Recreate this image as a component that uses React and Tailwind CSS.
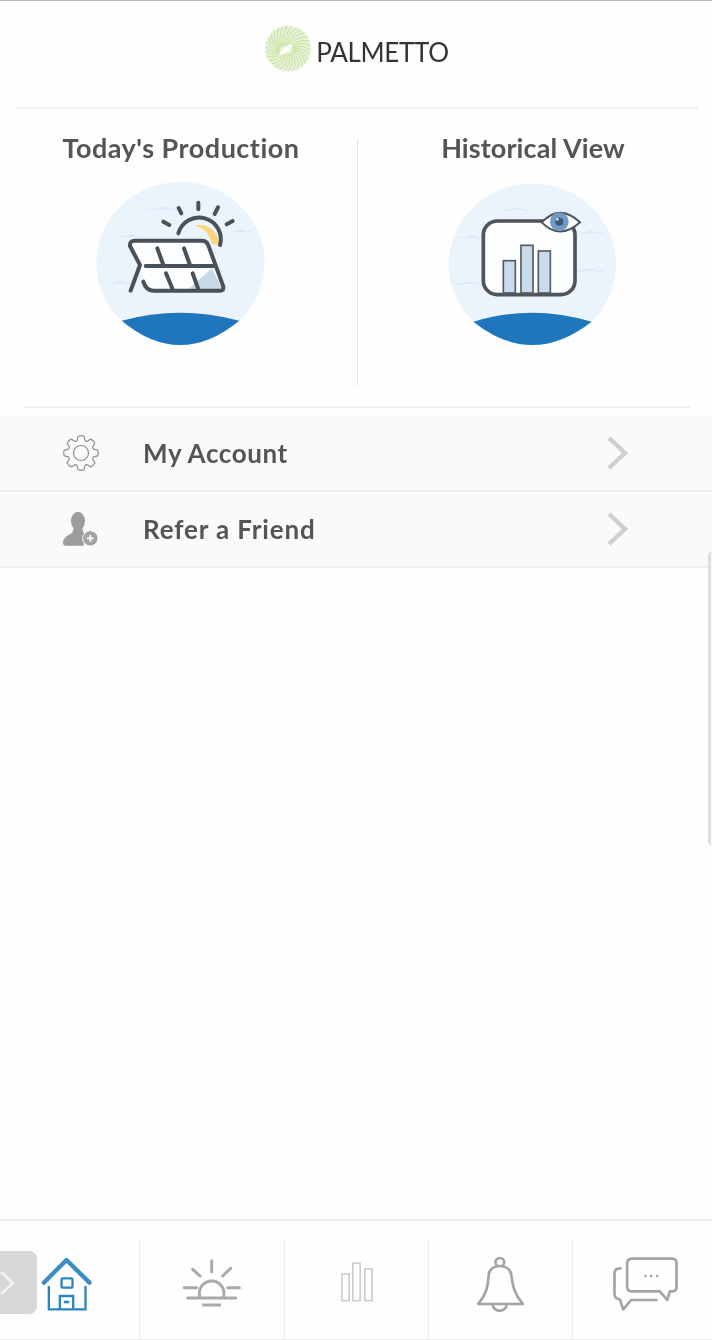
import React from 'react';

// logo sunburst, strokes curl out from the small leaf in the middle
const rays = Array.from({ length: 30 }, (_, i) => {
    const a = (i / 30) * Math.PI * 2;
    const sx = 21 + Math.cos(a) * 7;
    const sy = 25 + Math.sin(a) * 4;
    const ex = 23 + Math.cos(a + 0.5) * 22.5;
    const ey = 23.5 + Math.sin(a + 0.5) * 22.5;
    const cx = 23 + Math.cos(a + 0.05) * 16;
    const cy = 24 + Math.sin(a + 0.05) * 15;
    return `M${sx.toFixed(1)},${sy.toFixed(1)} Q${cx.toFixed(1)},${cy.toFixed(1)} ${ex.toFixed(1)},${ey.toFixed(1)}`;
});

// outline of the 8 tooth gear in the account row
const gearPath = (() => {
    const pts = [];
    for (let i = 0; i < 8; i++) {
        const a = (i / 8) * Math.PI * 2 - Math.PI / 2;
        const p = (r, off) => `${(18 + Math.cos(a + off) * r).toFixed(2)},${(18 + Math.sin(a + off) * r).toFixed(2)}`;
        pts.push(`${i === 0 ? 'M' : 'L'}${p(13.2, -0.3)} L${p(17, -0.17)} Q${p(17.8, 0)} ${p(17, 0.17)} L${p(13.2, 0.3)} Q${p(12.4, 0.39)} ${p(13.2, 0.485)}`);
    }
    return pts.join(' ') + ' Z';
})();

const Logo = () => (
    <svg width="46" height="48" viewBox="0 0 46 48" className="mb-[10px]">
        <circle cx="23" cy="23.5" r="23" fill="#e8f2d8" />
        {rays.map((d, i) => (
            <path key={i} d={d} fill="none" stroke="#c6e09c" strokeWidth="1" />
        ))}
        <path d="M14,30 Q18,20 28,19 Q25,29 14,30 Z" fill="#fbfdf6" />
    </svg>
);

const Cloud = ({ x, y, w }) => (
    <path d={`M${x},${y} h${w * 0.3} q${w * 0.1},-7 ${w * 0.25},-5 q${w * 0.15},0 ${w * 0.2},5 h${w * 0.25}`} fill="#dbe7f4" stroke="#dbe7f4" strokeWidth="3" />
);

const ProductionArt = () => (
    <svg width="200" height="190" viewBox="3 0 600 570">
        <path d="M125,452 A252,243 0 1 1 478,452 Z" fill="#ebf3fc" />
        <path d="M125,452 Q300,404 478,452 Q300,598 125,452 Z" fill="#1f76bd" />
        <Cloud x={200} y={118} w={85} />
        <Cloud x={115} y={200} w={70} />
        <Cloud x={85} y={340} w={70} />
        <Cloud x={450} y={186} w={62} />
        <path d="M162,212 H370 Q382,212 386,224 L430,350 Q432,362 420,362 H215 Q198,362 190,335 L180,285 L150,228 Q148,212 162,212 Z" fill="#fdfeff" />
        <path d="M345,165 A62,62 0 0 1 418,225 L396,222 A78,78 0 0 0 345,165 Z" fill="#fbd77c" />
        <path d="M395,295 L428,358 H325 Z" fill="#c9d8e7" />
        <g fill="none" stroke="#4b5159" strokeWidth="12" strokeLinecap="round" strokeLinejoin="round">
            <path d="M295,190 A62,62 0 0 1 420,225" />
            <path d="M355,98 V118 M296,114 L304,130 M414,112 L404,132 M250,155 L268,165 M458,153 L440,163" />
            <path d="M152,362 L180,285 L150,228 Q148,212 165,212 H365 Q380,212 385,226 L430,350 Q432,362 420,362 H220 Q198,362 190,335" />
            <path d="M197,288 H405" />
            <path d="M232,235 L250,285 M312,235 L330,285 M258,310 L278,358 M338,310 L355,358" />
        </g>
    </svg>
);

const HistoryArt = () => (
    <svg width="200" height="190" viewBox="-6 0 600 570">
        <path d="M115,455 A251,243 0 1 1 470,455 Z" fill="#ebf3fc" />
        <path d="M115,455 Q290,401 470,455 Q290,595 115,455 Z" fill="#1f76bd" />
        <Cloud x={195} y={120} w={95} />
        <Cloud x={75} y={203} w={65} />
        <Cloud x={65} y={342} w={75} />
        <Cloud x={425} y={190} w={85} />
        <Cloud x={420} y={303} w={85} />
        <rect x="145" y="153" width="275" height="221" rx="42" fill="#fdfeff" stroke="#4e545a" strokeWidth="11" />
        <g fill="#c9dbed" stroke="#565b60" strokeWidth="5">
            <rect x="205" y="272" width="36" height="97" />
            <rect x="258" y="226" width="36" height="143" />
            <rect x="310" y="243" width="36" height="126" />
        </g>
        <path d="M320,157 Q375,100 435,157 Q375,212 320,157 Z" fill="#fdfeff" stroke="#4e545a" strokeWidth="6" />
        <circle cx="373" cy="155" r="28" fill="#6f9bc6" />
        <circle cx="373" cy="155" r="12" fill="#3c5873" />
        <circle cx="367" cy="148" r="4" fill="#dbe7f4" />
    </svg>
);

const Chevron = () => (
    <svg width="24" height="36" viewBox="0 0 24 36" className="ml-auto mr-[83px]">
        <path d="M4,3 L20,18 L4,33" fill="none" stroke="#cfcfcf" strokeWidth="4.4" />
    </svg>
);

const Gear = () => (
    <svg width="42" height="36" viewBox="-3 0 42 36">
        <path d={gearPath} fill="none" stroke="#8f8f8f" strokeWidth="1.2" strokeLinejoin="round" />
        <circle cx="18" cy="18" r="7.5" fill="none" stroke="#8f8f8f" strokeWidth="1.2" />
    </svg>
);

const PersonPlus = () => (
    <svg width="42" height="36" viewBox="-9 0 126 108">
        <ellipse cx="45" cy="30" rx="21" ry="28" fill="#9d9d9d" />
        <path d="M32,52 H58 L62,66 Q72,70 76,78 Q60,88 62,104 H12 Q-6,104 2,86 Q10,72 28,66 Z" fill="#9d9d9d" />
        <circle cx="82" cy="82" r="23" fill="#a3a3a3" stroke="#fafafa" strokeWidth="3" />
        <path d="M72,82 H92 M82,72 V92" stroke="#f5f5f5" strokeWidth="6" />
    </svg>
);

const HomeIcon = () => (
    <svg width="100" height="70" viewBox="58.5 120 300 210">
        <path d="M130,218 L198,150 L267,218" fill="none" stroke="#3a8cc4" strokeWidth="13" strokeLinecap="round" strokeLinejoin="round" />
        <g fill="none" stroke="#2b86c2" strokeWidth="7">
            <path d="M145,228 V298 H255 V228" />
            <rect x="183" y="205" width="33" height="28" rx="4" />
            <path d="M178,298 V258 H218 V298 M190,276 H206" />
        </g>
    </svg>
);

const SunIcon = () => (
    <svg width="100" height="70" viewBox="486 120 300 210">
        <g fill="none" stroke="#a9a9a9" strokeWidth="9" strokeLinecap="round">
            <path d="M600,262 A37,37 0 1 1 670,262" />
            <path d="M635,152 V185 M578,178 L600,198 M692,175 L668,198 M553,233 H590 M683,233 H718" />
            <path d="M563,264 H707" />
            <path d="M607,285 H663" strokeLinecap="butt" />
        </g>
    </svg>
);

const BarsIcon = () => (
    <svg width="100" height="70" viewBox="19.5 120 300 210">
        <g fill="none" stroke="#cdcdcd" strokeWidth="5">
            <rect x="124" y="192" width="22" height="80" />
            <rect x="157" y="160" width="22" height="112" />
            <rect x="193" y="177" width="22" height="95" />
        </g>
    </svg>
);

const BellIcon = () => (
    <svg width="100" height="70" viewBox="451.5 120 300 210">
        <g fill="none" stroke="#a4a4a4" strokeWidth="8" strokeLinejoin="round">
            <circle cx="598" cy="157" r="13" />
            <path d="M533,282 C565,245 562,215 565,192 C570,160 625,160 632,192 C636,215 635,245 667,282 Z" fill="#fefefe" />
            <path d="M577,285 A20,17 0 0 0 618,285" />
        </g>
    </svg>
);

const ChatIcon = () => (
    <svg width="100" height="70" viewBox="877.5 120 300 210">
        <g fill="none" stroke="#a4a4a4" strokeWidth="8" strokeLinejoin="round" strokeLinecap="round">
            <path d="M995,146 H1115 Q1128,146 1128,160 V230 Q1128,244 1115,244 H1108 L1100,270 L1078,244 H995 Q980,244 980,230 V160 Q980,146 995,146 Z" />
            <path d="M960,175 Q942,175 942,190 V250 Q942,268 958,268 L968,298 L992,270 H1068" />
        </g>
        <circle cx="1035" cy="198" r="4" fill="#a4a4a4" />
        <circle cx="1052" cy="198" r="4" fill="#a4a4a4" />
        <circle cx="1070" cy="198" r="4" fill="#a4a4a4" />
    </svg>
);

const App = () => {
    return (
        <div className="relative flex h-[1340px] w-[712px] flex-col overflow-hidden bg-[#fefefe] font-['Lato',sans-serif] blur-[0.4px]">
            <header className="flex h-[107px] items-center justify-center gap-[5px] border-t border-[#b9b9b9] pl-[2px]">
                <Logo />
                <span className="mb-[5px] text-[26px] leading-none tracking-[-0.35px] text-[#333]">PALMETTO</span>
            </header>
            <div className="ml-4 mr-[14px] h-[2px] bg-[#f1f1f1]"></div>

            <section className="flex h-[297px] pt-[25px]">
                <div className="flex w-[357px] flex-col items-center pl-[5px]">
                    <h2 className="mb-[9px] h-[27px] text-[27px] font-bold leading-[27px] tracking-[0.5px] text-[#555]">Today's Production</h2>
                    <ProductionArt />
                </div>
                <div className="mt-[5px] h-[247px] w-px bg-[#e6e6e6]"></div>
                <div className="flex w-[354px] flex-col items-center pr-[4px]">
                    <h2 className="mb-[9px] h-[27px] text-[27px] font-bold leading-[27px] tracking-[0.1px] text-[#555]">Historical View</h2>
                    <HistoryArt />
                </div>
            </section>

            <div className="ml-6 mr-[22px] h-[2px] bg-[#f1f1f1]"></div>

            <nav className="mt-[8px]">
                <a className="flex h-[76px] items-center border-b-2 border-[#eeeeee] bg-[#fafafa] pl-[60px]">
                    <Gear />
                    <span className="ml-[41px] text-[26px] font-bold tracking-[0.6px] text-[#555]">My Account</span>
                    <Chevron />
                </a>
                <a className="flex h-[76px] items-center border-b-2 border-[#eeeeee] bg-[#fafafa] pl-[60px]">
                    <PersonPlus />
                    <span className="ml-[41px] text-[26px] font-bold tracking-[0.85px] text-[#555]">Refer a Friend</span>
                    <Chevron />
                </a>
            </nav>

            <div className="flex-1"></div>

            <footer className="flex h-[121px] border-t-2 border-b border-[#eeeeee] pt-[17px]">
                <div className="flex w-[139px] justify-center pt-[12px]"><HomeIcon /></div>
                <div className="flex w-[145px] justify-center border-l border-[#eeeeee] pt-[12px]"><SunIcon /></div>
                <div className="flex w-[144px] justify-center border-l border-[#eeeeee] pt-[12px]"><BarsIcon /></div>
                <div className="flex w-[144px] justify-center border-l border-[#eeeeee] pt-[12px]"><BellIcon /></div>
                <div className="flex w-[140px] justify-center border-l border-[#eeeeee] pt-[12px]"><ChatIcon /></div>
            </footer>

            {/* floating drawer handle over the tab bar */}
            <div className="absolute left-0 top-[1251px] flex h-[63px] w-[37px] items-center rounded-r-lg bg-[#d7d7d7]">
                <svg width="16" height="26" viewBox="0 0 16 26">
                    <path d="M1,2 L13,13 L1,24" fill="none" stroke="#f4f4f4" strokeWidth="2.5" />
                </svg>
            </div>

            {/* edge panel tab on the right */}
            <div className="absolute left-[708px] top-[552px] h-[293px] w-[4px] rounded-l-md border-l-[3px] border-[#dedede]"></div>
        </div>
    );
};

export default App;
